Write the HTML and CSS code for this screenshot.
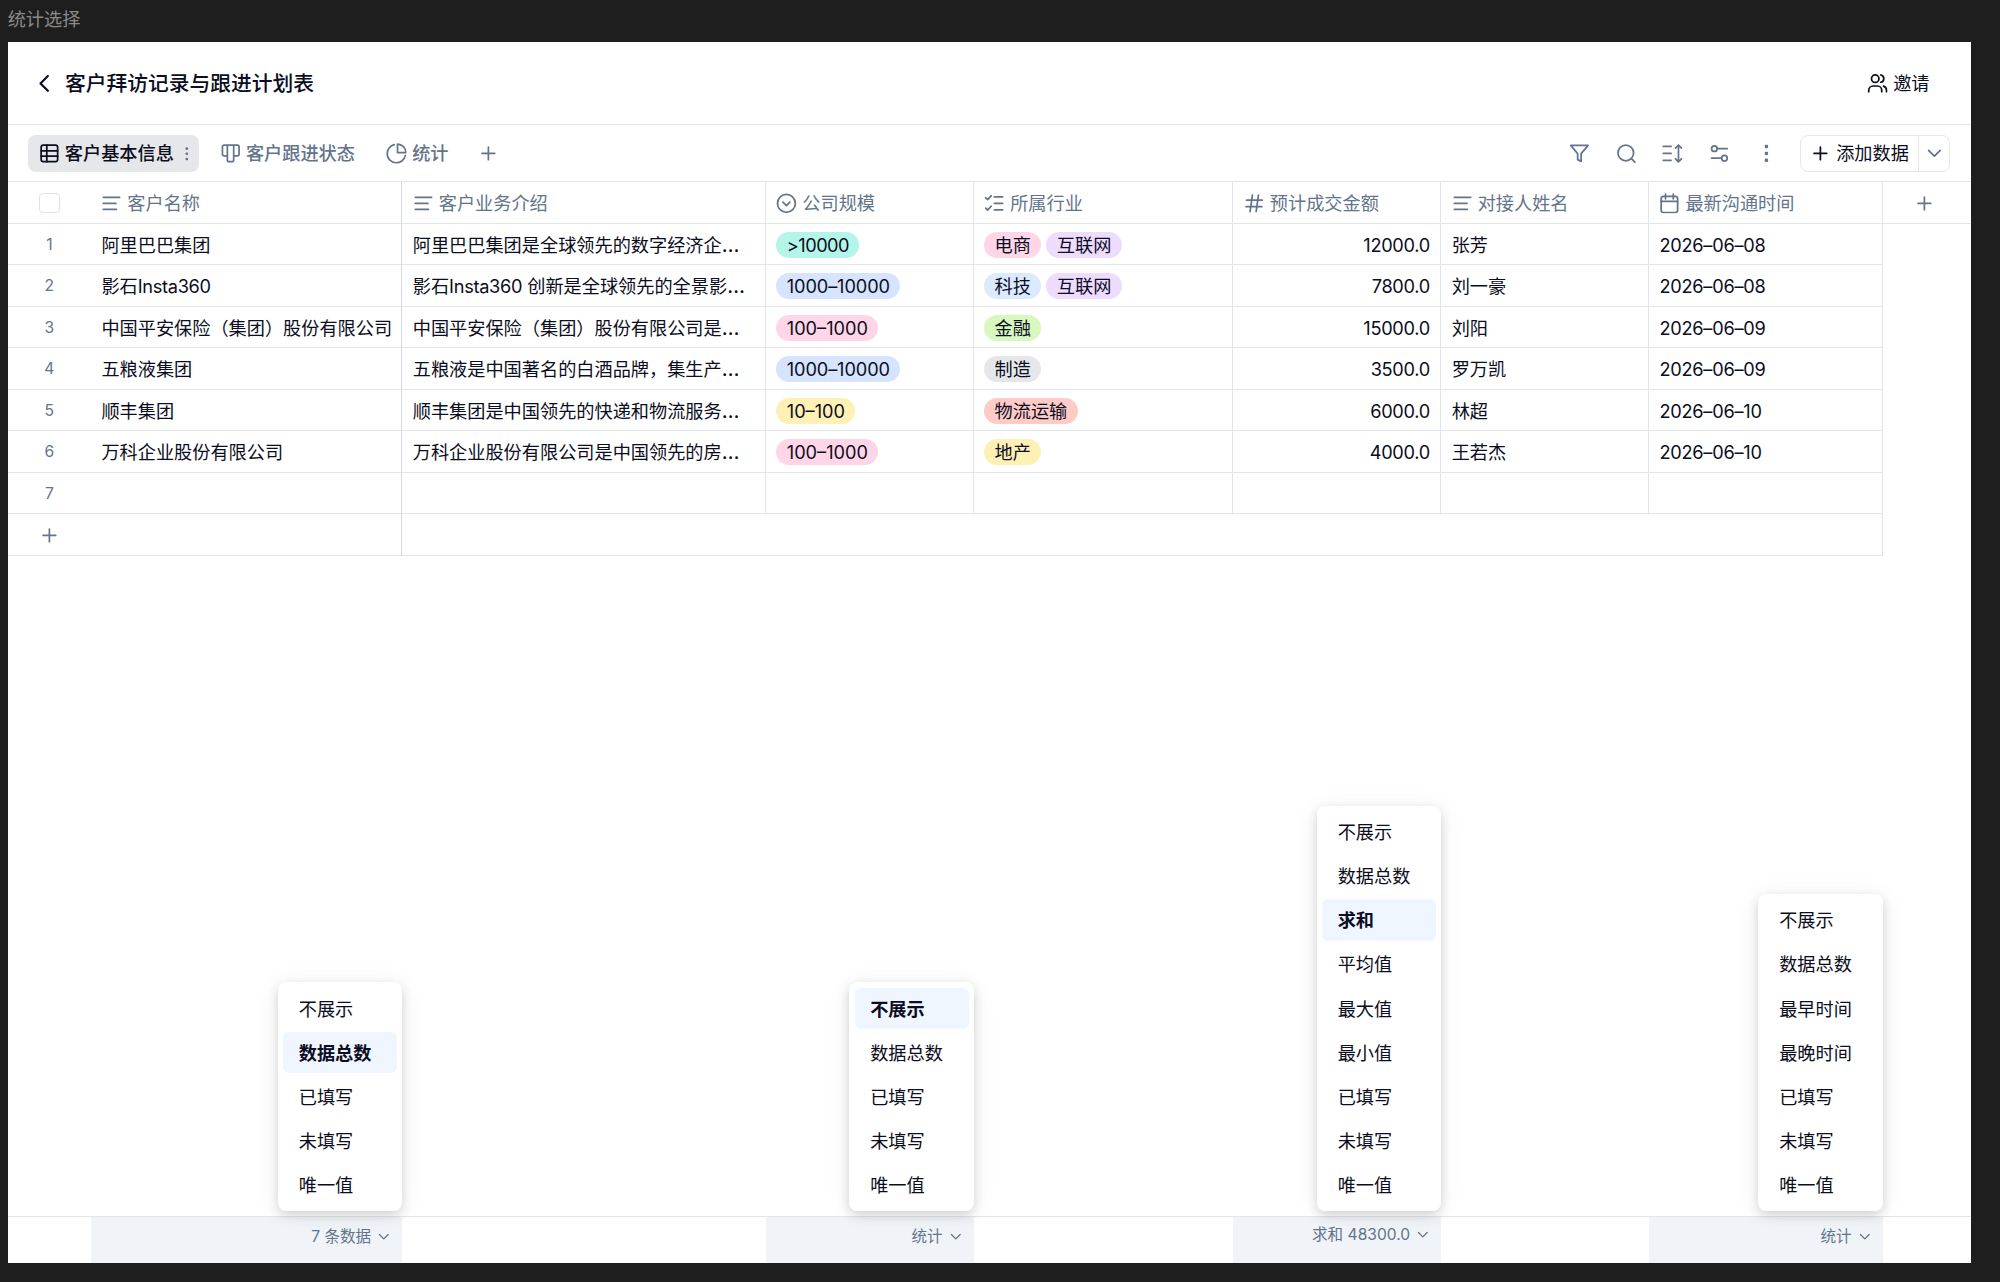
FILE: index.html
```html
<!DOCTYPE html>
<html lang="zh-CN">
<head>
<meta charset="utf-8">
<title>客户拜访记录与跟进计划表</title>
<link rel="stylesheet" href="styles.css">
</head>
<body>
<svg class="sprite" aria-hidden="true">
  <symbol id="i-back" viewBox="0 0 24 24"><path d="M16 3.500 7.500 12l8.500 8.500"/></symbol>
  <symbol id="i-users" viewBox="0 0 24 24"><path d="M2 21.500v-1.500a5 5 0 0 1 5-5h5a5 5 0 0 1 5 5v1.500"/><circle cx="9.500" cy="6.500" r="4.300"/><path d="M16 2.300a4.300 4.300 0 0 1 0 8.400M19 15.200a5 5 0 0 1 3.500 4.800v1.500"/></symbol>
  <symbol id="i-table" viewBox="0 0 24 24"><rect x="2.500" y="2.500" width="19" height="19" rx="2.500"/><path d="M2.500 9h19M2.500 15.200h19M9 2.500v19"/></symbol>
  <symbol id="i-dots" viewBox="0 0 24 24"><g fill="currentColor" stroke="none"><rect x="10" y="2" width="4" height="4" rx="1.500"/><rect x="10" y="10" width="4" height="4" rx="1.500"/><rect x="10" y="18" width="4" height="4" rx="1.500"/></g></symbol>
  <symbol id="i-board" viewBox="0 0 24 24"><path d="M8.500 2.500v12.300H4.800a2 2 0 0 1-2-2V4.500a2 2 0 0 1 2-2H20a2 2 0 0 1 2 2v8.300a2 2 0 0 1-2 2h-4M8.500 14.800v4.700a2 2 0 0 0 2 2h3.300a2 2 0 0 0 2-2v-17"/></symbol>
  <symbol id="i-pie" viewBox="0 0 24 24"><path d="M22.300 14.500A10.600 10.600 0 1 1 9.500 1.900"/><path d="M13.300 1.200a10 10 0 0 1 9.600 9.800h-9.600z"/></symbol>
  <symbol id="i-plus" viewBox="0 0 24 24"><path d="M4.700 12h14.600M12 4.700v14.600"/></symbol>
  <symbol id="i-filter" viewBox="0 0 24 24"><path d="M2 2.800h20l-8 9.500v8.900l-4-2v-6.900z"/></symbol>
  <symbol id="i-search" viewBox="0 0 24 24"><circle cx="11.300" cy="11.500" r="9"/><path d="m18 18.200 3.800 3.800"/></symbol>
  <symbol id="i-sort" viewBox="0 0 24 24"><path d="M1.500 4h9M1.500 12h9M1.500 20h9M19 2.500v19M15.500 5.800 19 2.300l3.500 3.500M15.500 18.200l3.500 3.500 3.500-3.500"/></symbol>
  <symbol id="i-sliders" viewBox="0 0 24 24"><circle cx="6.200" cy="6.500" r="3.200"/><path d="M9.500 6.500H21M3 17.500h11.500"/><circle cx="17.800" cy="17.500" r="3.200"/></symbol>
  <symbol id="i-down" viewBox="0 0 24 24"><path d="m5.300 8.500 6.700 6.700 6.700-6.700"/></symbol>
  <symbol id="i-text" viewBox="0 0 24 24"><path d="M2.700 5h18.800M2.700 12h14.500M2.700 19h15"/></symbol>
  <symbol id="i-select" viewBox="0 0 24 24"><circle cx="12" cy="12" r="10.300"/><path d="m8 10.500 4 4 4-4"/></symbol>
  <symbol id="i-multi" viewBox="0 0 24 24"><path d="M12 4.500h9.500M12 12h9.500M12 19.500h9.500M2 5.500l2.200 2.200L8.300 3.300M2 17.500l2.200 2.200 4.100-4.400"/></symbol>
  <symbol id="i-hash" viewBox="0 0 24 24"><path d="M3 8.300h18M2.500 15.800h18M9.700 2.500 7 21.500M16.700 2.500 14 21.500"/></symbol>
  <symbol id="i-date" viewBox="0 0 24 24"><rect x="2.500" y="4" width="19" height="18.500" rx="2.500"/><path d="M2.500 9.700h19M7.500 1.200v5.500M16.500 1.200v5.500"/></symbol>
</svg>

<div class="frame-label">统计选择</div>
<main class="frame">
  <header class="topbar">
    <div class="title"><svg class="icon"><use href="#i-back"/></svg><h1>客户拜访记录与跟进计划表</h1></div>
    <div class="invite"><svg class="icon"><use href="#i-users"/></svg><span>邀请</span></div>
  </header>

  <nav class="toolbar">
    <div class="tabs">
      <div class="tab active"><svg class="icon"><use href="#i-table"/></svg><span>客户基本信息</span><svg class="icon tab-more"><use href="#i-dots"/></svg></div>
      <div class="tab"><svg class="icon"><use href="#i-board"/></svg><span>客户跟进状态</span></div>
      <div class="tab"><svg class="icon"><use href="#i-pie"/></svg><span>统计</span></div>
      <div class="tab tab-new"><svg class="icon"><use href="#i-plus"/></svg></div>
    </div>
    <div class="tools">
      <svg class="icon"><use href="#i-filter"/></svg>
      <svg class="icon"><use href="#i-search"/></svg>
      <svg class="icon"><use href="#i-sort"/></svg>
      <svg class="icon"><use href="#i-sliders"/></svg>
      <svg class="icon"><use href="#i-dots"/></svg>
      <div class="add">
        <div class="add-main"><svg class="icon"><use href="#i-plus"/></svg><span>添加数据</span></div>
        <div class="add-more"><svg class="icon"><use href="#i-down"/></svg></div>
      </div>
    </div>
  </nav>

  <section class="sheet">
    <div class="row head">
      <div class="idx"><span class="checkbox"></span></div>
      <div class="cell pinned"><svg class="icon"><use href="#i-text"/></svg>客户名称</div>
      <div class="cell"><svg class="icon"><use href="#i-text"/></svg>客户业务介绍</div>
      <div class="cell"><svg class="icon"><use href="#i-select"/></svg>公司规模</div>
      <div class="cell"><svg class="icon"><use href="#i-multi"/></svg>所属行业</div>
      <div class="cell"><svg class="icon"><use href="#i-hash"/></svg>预计成交金额</div>
      <div class="cell"><svg class="icon"><use href="#i-text"/></svg>对接人姓名</div>
      <div class="cell"><svg class="icon"><use href="#i-date"/></svg>最新沟通时间</div>
      <div class="idx add-col"><svg class="icon"><use href="#i-plus"/></svg></div>
    </div>
    <div class="row">
      <div class="idx">1</div><div class="cell pinned">阿里巴巴集团</div><div class="cell intro"><span>阿里巴巴集团是全球领先的数字经济企<i>…</i></span></div>
      <div class="cell"><span class="tag teal">&gt;10000</span></div>
      <div class="cell"><span class="tag pink">电商</span><span class="tag purple">互联网</span></div>
      <div class="cell num">12000.0</div><div class="cell">张芳</div><div class="cell date">2026–06–08</div>
    </div>
    <div class="row">
      <div class="idx">2</div><div class="cell pinned"><span>影石<b>Insta360</b></span></div><div class="cell intro"><span>影石<b>Insta360</b> 创新是全球领先的全景影<i>…</i></span></div>
      <div class="cell"><span class="tag blue">1000–10000</span></div>
      <div class="cell"><span class="tag sky">科技</span><span class="tag purple">互联网</span></div>
      <div class="cell num">7800.0</div><div class="cell">刘一豪</div><div class="cell date">2026–06–08</div>
    </div>
    <div class="row">
      <div class="idx">3</div><div class="cell pinned">中国平安保险（集团）股份有限公司</div><div class="cell intro"><span>中国平安保险（集团）股份有限公司是<i>…</i></span></div>
      <div class="cell"><span class="tag pink">100–1000</span></div>
      <div class="cell"><span class="tag green">金融</span></div>
      <div class="cell num">15000.0</div><div class="cell">刘阳</div><div class="cell date">2026–06–09</div>
    </div>
    <div class="row">
      <div class="idx">4</div><div class="cell pinned">五粮液集团</div><div class="cell intro"><span>五粮液是中国著名的白酒品牌，集生产<i>…</i></span></div>
      <div class="cell"><span class="tag blue">1000–10000</span></div>
      <div class="cell"><span class="tag gray">制造</span></div>
      <div class="cell num">3500.0</div><div class="cell">罗万凯</div><div class="cell date">2026–06–09</div>
    </div>
    <div class="row">
      <div class="idx">5</div><div class="cell pinned">顺丰集团</div><div class="cell intro"><span>顺丰集团是中国领先的快递和物流服务<i>…</i></span></div>
      <div class="cell"><span class="tag yellow">10–100</span></div>
      <div class="cell"><span class="tag red">物流运输</span></div>
      <div class="cell num">6000.0</div><div class="cell">林超</div><div class="cell date">2026–06–10</div>
    </div>
    <div class="row">
      <div class="idx">6</div><div class="cell pinned">万科企业股份有限公司</div><div class="cell intro"><span>万科企业股份有限公司是中国领先的房<i>…</i></span></div>
      <div class="cell"><span class="tag pink">100–1000</span></div>
      <div class="cell"><span class="tag yellow">地产</span></div>
      <div class="cell num">4000.0</div><div class="cell">王若杰</div><div class="cell date">2026–06–10</div>
    </div>
    <div class="row">
      <div class="idx">7</div><div class="cell pinned"></div><div class="cell"></div><div class="cell"></div><div class="cell"></div><div class="cell"></div><div class="cell"></div><div class="cell"></div>
    </div>
    <div class="row new">
      <div class="idx"><svg class="icon"><use href="#i-plus"/></svg></div><div class="cell pinned"></div><div class="cell rest"></div>
    </div>
  </section>

  <footer class="summary">
    <div class="stat s-name">
      <span>7 条数据</span><svg class="icon"><use href="#i-down"/></svg>
      <ul class="menu"><li>不展示</li><li class="on">数据总数</li><li>已填写</li><li>未填写</li><li>唯一值</li></ul>
    </div>
    <div class="stat s-size">
      <span>统计</span><svg class="icon"><use href="#i-down"/></svg>
      <ul class="menu"><li class="on">不展示</li><li>数据总数</li><li>已填写</li><li>未填写</li><li>唯一值</li></ul>
    </div>
    <div class="stat s-amount">
      <span>求和 48300.0</span><svg class="icon"><use href="#i-down"/></svg>
      <ul class="menu"><li>不展示</li><li>数据总数</li><li class="on">求和</li><li>平均值</li><li>最大值</li><li>最小值</li><li>已填写</li><li>未填写</li><li>唯一值</li></ul>
    </div>
    <div class="stat s-date">
      <span>统计</span><svg class="icon"><use href="#i-down"/></svg>
      <ul class="menu"><li>不展示</li><li>数据总数</li><li>最早时间</li><li>最晚时间</li><li>已填写</li><li>未填写</li><li>唯一值</li></ul>
    </div>
  </footer>
</main>
</body>
</html>
```
FILE: styles.css
```css
:root {
  --ink: #0b0d21;
  --muted: #64748b;
  --line: #e3e6e9;
  --row: 41.55px;
  --cols: 83.3px 311.4px 363.6px 207.8px 259.7px 207.8px 207.8px 233.7px 1fr;
}

* { box-sizing: border-box; }

body {
  margin: 0;
  height: 1282px;
  overflow: hidden;
  background: #1e1e1e;
  color: var(--ink);
  font: 18.18px/26px Inter, "Noto Sans CJK SC", sans-serif;
}

.sprite { position: absolute; width: 0; height: 0; }

.icon {
  flex: none;
  width: 20.8px;
  height: 20.8px;
  fill: none;
  stroke: currentColor;
  stroke-width: 2;
  stroke-linecap: round;
  stroke-linejoin: round;
  overflow: visible;
}

.frame-label {
  height: 42px;
  padding: 6px 0 0 7.7px;
  color: #8a8a8a;
}

.frame {
  display: flex;
  flex-direction: column;
  width: 1963.3px;
  height: 1220.6px;
  margin-left: 7.7px;
  background: #fff;
}

/* title bar */
.topbar {
  display: flex;
  justify-content: space-between;
  align-items: center;
  height: 83px;
  padding: 0 41.5px 0 26px;
  border-bottom: 1px solid var(--line);
}

.title, .invite { display: flex; align-items: center; }
.title { gap: 10.4px; }
.invite { gap: 5.2px; }
.title .icon { stroke-width: 2.5; }

h1 {
  margin: 0;
  padding-top: 2px;
  font-size: 20.78px;
  font-weight: 500;
  line-height: 30px;
}

/* view tabs and tools */
.toolbar {
  display: flex;
  justify-content: space-between;
  align-items: center;
  height: 57px;
  padding: 1px 20.8px 0;
  border-bottom: 1px solid var(--line);
}

.tabs, .tools { display: flex; align-items: center; color: var(--muted); }
.tabs { gap: 10.4px; }

.tab {
  display: flex;
  align-items: center;
  gap: 5.2px;
  height: 36.4px;
  padding: 0 10.4px;
  border-radius: 7.8px;
  font-weight: 500;
}

.tab.active { padding-right: 5px; background: #e5e7eb; color: var(--ink); }
.tab.active .tab-more { width: 15.6px; height: 15.6px; margin-left: -0.5px; color: var(--muted); }
.tab-new { margin-left: -2px; }

.tools { gap: 26px; }

.add {
  display: flex;
  height: 36.4px;
  margin-left: -2.6px;
  border: 1px solid #e5e7eb;
  border-radius: 7.8px;
}

.add-main, .add-more { display: flex; align-items: center; }
.add-main { gap: 5.2px; padding: 0 9px; color: var(--ink); }
.add-more { padding: 0 4.400px 0 5.200px; border-left: 1px solid #e5e7eb; }

/* data grid */
.row {
  display: grid;
  grid-template-columns: var(--cols);
  height: var(--row);
}

.row > div { border-bottom: 1px solid var(--line); }

.idx {
  display: flex;
  align-items: center;
  justify-content: center;
  padding-top: 1.5px;
  color: var(--muted);
  font-size: 15.58px;
}

.add-col { padding-right: 4px; }

.cell {
  display: flex;
  align-items: center;
  gap: 5.2px;
  min-width: 0;
  padding: 1.5px 10.4px 0;
  border-right: 1px solid var(--line);
  white-space: nowrap;
}

.cell b { font-weight: 400; letter-spacing: -0.3px; }
.cell i { font-style: normal; font-size: 20.5px; line-height: 1; }
.cell.pinned { border-right-color: #d3d7df; }
.cell.num { justify-content: flex-end; letter-spacing: -0.3px; }
.cell.date { letter-spacing: -0.25px; }
.cell.rest { grid-column: 3 / 9; }
.head .cell { color: var(--muted); }

.checkbox {
  width: 20.8px;
  height: 20.8px;
  border: 1px solid #dfe2e8;
  border-radius: 4px;
}

.tag {
  height: 26px;
  padding: 0 10.4px;
  border-radius: 13px;
  line-height: 26px;
}

.teal { background: #b3f5e8; letter-spacing: -0.5px; }
.blue { background: #d6e4ff; letter-spacing: -0.1px; }
.sky { background: #dbeafe; }
.pink { background: #ffd6e7; }
.purple { background: #eedcff; }
.green { background: #d8f8c0; }
.gray { background: #e5e7eb; }
.yellow { background: #fff0b5; }
.red { background: #ffcbc7; }

/* column statistics */
.summary {
  display: grid;
  grid-template-columns: var(--cols);
  height: 46.6px;
  margin-top: auto;
  border-top: 1px solid var(--line);
}

.stat {
  position: relative;
  display: flex;
  align-items: center;
  justify-content: flex-end;
  gap: 5.2px;
  padding: 0 10.4px 6px;
  background: #f0f4f8;
  color: var(--muted);
  font-size: 15.58px;
}

.stat .icon { width: 15.6px; height: 15.6px; }
.s-name { grid-column: 2; }
.s-size { grid-column: 4; }
.s-amount { grid-column: 6; padding-bottom: 10px; }
.s-date { grid-column: 8; }

.menu {
  position: absolute;
  right: 0;
  bottom: 52px;
  display: flex;
  flex-direction: column;
  gap: 2.6px;
  width: 124.4px;
  margin: 0;
  padding: 5.2px;
  list-style: none;
  border-radius: 8px;
  background: #fff;
  box-shadow: 0 4px 12px rgba(0, 0, 0, .16), 0 2px 28px rgba(0, 0, 0, .05);
  color: var(--ink);
  font-size: 18.18px;
}

.menu li {
  height: 41.5px;
  padding-left: 15.6px;
  border-radius: 6px;
  line-height: 42.5px;
}

.menu .on { background: #eff6ff; font-weight: 600; }
```
